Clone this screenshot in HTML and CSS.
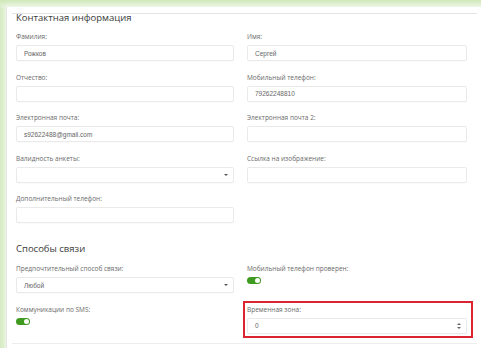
FILE: index.html
```html
<!DOCTYPE html>
<html lang="ru">
<head>
  <meta charset="UTF-8">
  <meta name="viewport" content="width=device-width, initial-scale=1.0">
  <title>Контактная информация</title>
  <link rel="stylesheet" href="styles.css">
</head>
<body>
  <div class="panel">
    <section class="block">
      <h2 class="block-title block-title-first">Контактная информация</h2>
      <div class="fields">
        <div class="field">
          <label>Фамилия:</label>
          <div class="control">Рожков</div>
        </div>
        <div class="field">
          <label>Имя:</label>
          <div class="control">Сергей</div>
        </div>
        <div class="field">
          <label>Отчество:</label>
          <div class="control"></div>
        </div>
        <div class="field">
          <label>Мобильный телефон:</label>
          <div class="control">79262248810</div>
        </div>
        <div class="field">
          <label>Электронная почта:</label>
          <div class="control">s92622488@gmail.com</div>
        </div>
        <div class="field">
          <label>Электронная почта 2:</label>
          <div class="control"></div>
        </div>
        <div class="field">
          <label>Валидность анкеты:</label>
          <div class="control control-select"><span class="value"></span><span class="caret"></span></div>
        </div>
        <div class="field">
          <label>Ссылка на изображение:</label>
          <div class="control"></div>
        </div>
        <div class="field">
          <label>Дополнительный телефон:</label>
          <div class="control"></div>
        </div>
      </div>

      <h2 class="block-title">Способы связи</h2>
      <div class="fields">
        <div class="field">
          <label>Предпочтительный способ связи:</label>
          <div class="control control-select"><span class="value">Любой</span><span class="caret"></span></div>
        </div>
        <div class="field">
          <label>Мобильный телефон проверен:</label>
          <span class="toggle"></span>
        </div>
        <div class="field">
          <label>Коммуникации по SMS:</label>
          <span class="toggle"></span>
        </div>
        <div class="field field-marked">
          <label>Временная зона:</label>
          <div class="control control-number">
            <span class="value">0</span>
            <span class="spinner"><span class="up"></span><span class="down"></span></span>
          </div>
        </div>
      </div>
    </section>
  </div>
</body>
</html>
```

FILE: styles.css
```css
/* Base */
* {
  margin: 0;
  padding: 0;
  box-sizing: border-box;
}

body {
  height: 348px;
  overflow: hidden;
  background: linear-gradient(180deg, #cfe8b9 0, #e2f1d5 7px, #d5ebc4 8px);
  font-family: 'Open Sans', 'Noto Sans', sans-serif;
  color: #333;
}

/* Card */
.panel {
  margin: 7px 0 0 6px;
  height: 341px;
  padding: 6px 4px 0 5px;
  background-color: #fff;
  border-left: 1px solid #e6e6e6;
  box-shadow: 0 0 4px 2px rgba(240, 248, 234, 0.9);
}

.block {
  padding: 0 10px 9px 4px;
  border-top: 1px solid #e4e4e4;
  border-bottom: 1px solid #ededed;
}

.block-title {
  margin: 20px 0 10px;
  font-size: 9.5px;
  line-height: 11px;
  font-weight: 400;
  color: #3a3a3a;
}

.block-title-first {
  margin: -2px 0 9px;
}

/* Form grid */
.fields {
  display: grid;
  grid-template-columns: 218px 220px;
  column-gap: 13px;
  row-gap: 11.5px;
}

.field {
  display: flex;
  flex-direction: column;
  align-items: flex-start;
}

.field label {
  display: block;
  height: 10px;
  margin-bottom: 3px;
  font-size: 6.5px;
  line-height: 10px;
  color: #6a6a6a;
}

.control {
  display: flex;
  align-items: center;
  width: 100%;
  height: 16px;
  padding: 0 5px 0 7px;
  border: 1px solid #eaeaea;
  border-radius: 2px;
  background-color: #fff;
  box-shadow: 0 1px 1px rgba(0, 0, 0, 0.02);
  font-family: 'Liberation Sans', Arial, sans-serif;
  font-size: 6.5px;
  color: #666;
}

.control .value {
  flex: 1;
}

.caret {
  width: 0;
  height: 0;
  border-left: 2px solid transparent;
  border-right: 2px solid transparent;
  border-top: 2.5px solid #555;
}

.spinner {
  display: flex;
  flex-direction: column;
  gap: 2px;
}

.spinner .up,
.spinner .down {
  width: 0;
  height: 0;
  border-left: 2px solid transparent;
  border-right: 2px solid transparent;
}

.spinner .up {
  border-bottom: 2.5px solid #666;
}

.spinner .down {
  border-top: 2.5px solid #666;
}

/* Switch */
.toggle {
  position: relative;
  display: block;
  width: 14px;
  height: 7px;
  border-radius: 4px;
  background-color: #3f9b20;
}

.toggle::after {
  content: '';
  position: absolute;
  top: 1px;
  right: 1px;
  width: 5px;
  height: 5px;
  border-radius: 50%;
  background-color: #fff;
}

/* Highlighted field */
.field-marked {
  position: relative;
}

.field-marked::after {
  content: '';
  position: absolute;
  top: -3.5px;
  left: -4px;
  right: -6px;
  bottom: -4.5px;
  border: 2px solid #dc2430;
}
```
